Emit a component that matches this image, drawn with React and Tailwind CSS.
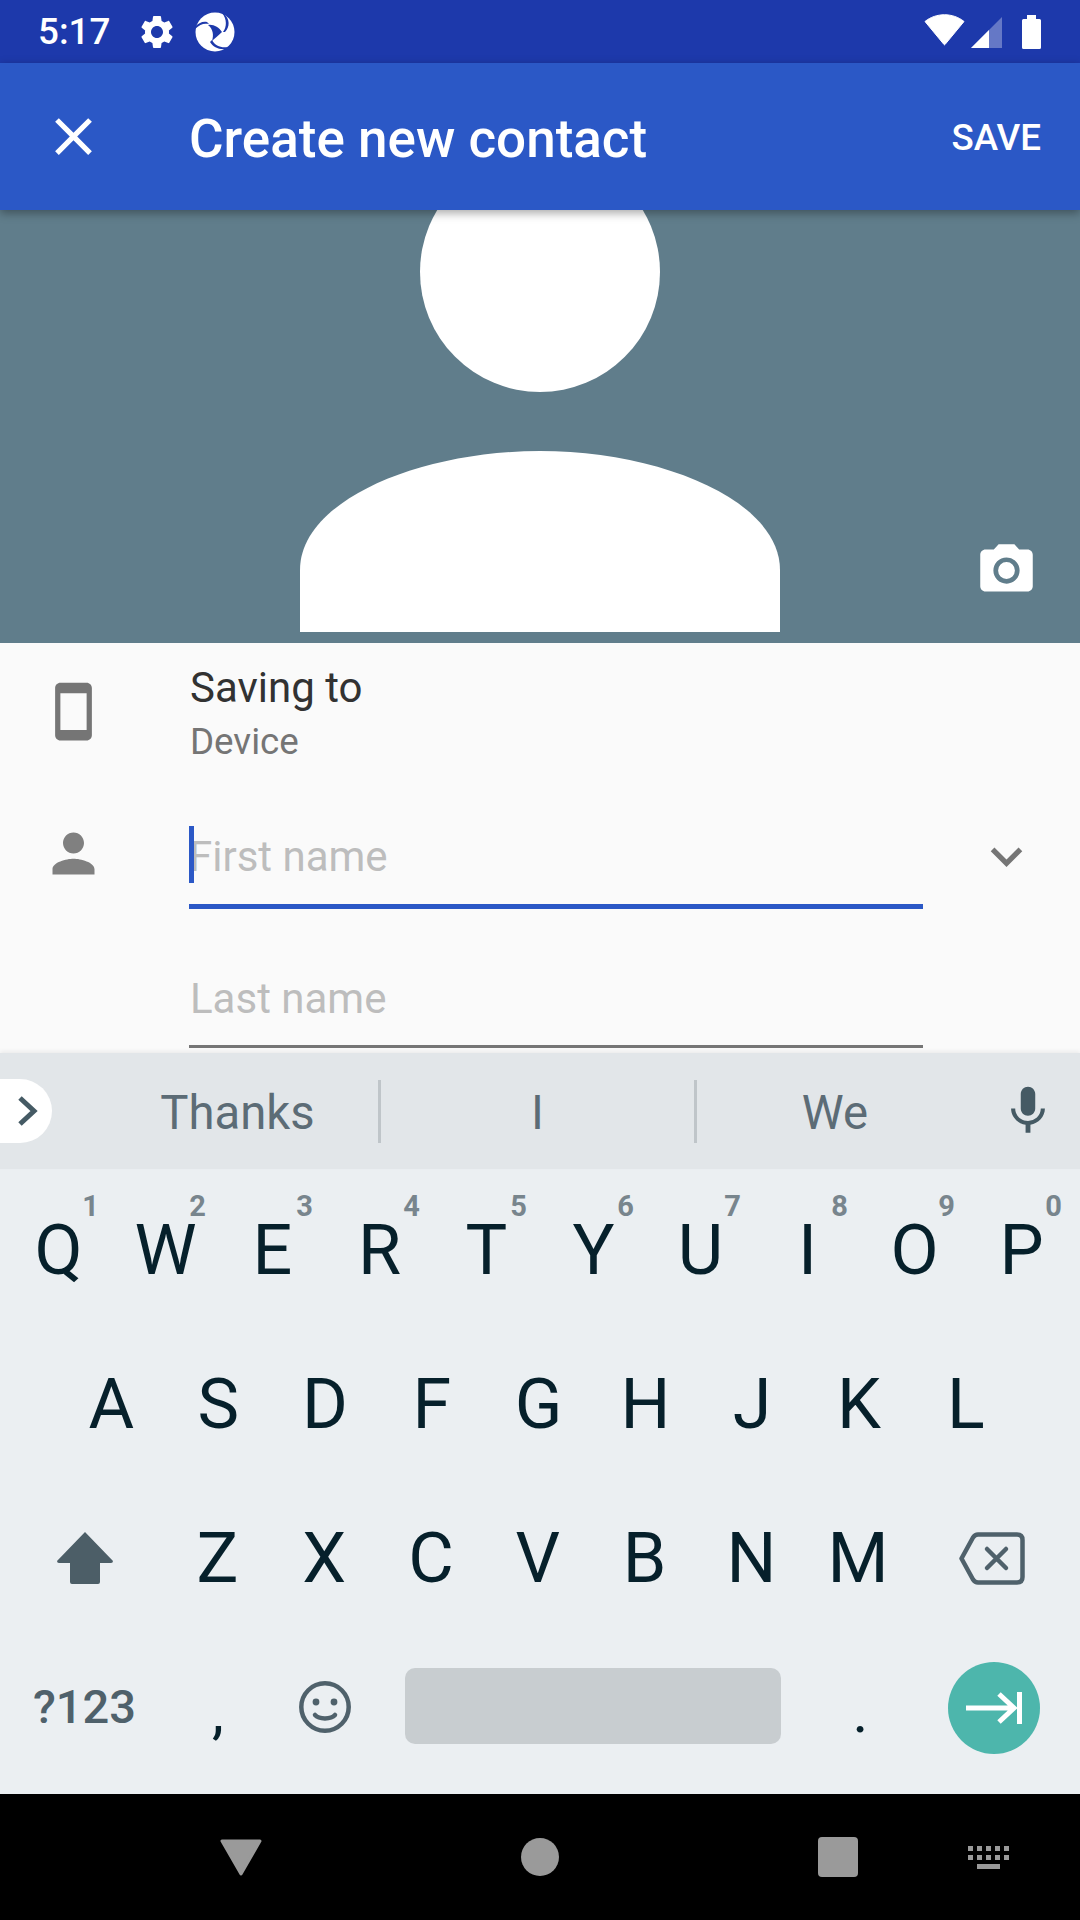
const topRow = [
  ["Q", "1"],
  ["W", "2"],
  ["E", "3"],
  ["R", "4"],
  ["T", "5"],
  ["Y", "6"],
  ["U", "7"],
  ["I", "8"],
  ["O", "9"],
  ["P", "0"],
];
const middleRow = ["A", "S", "D", "F", "G", "H", "J", "K", "L"];
const bottomRow = ["Z", "X", "C", "V", "B", "N", "M"];

function Key({ label, digit }) {
  return (
    <div className={`relative flex h-[154px] items-center justify-center text-[70px] leading-[154px] text-[#06202b] ${digit ? "w-[107px]" : "w-[106.8px]"}`}>
      {label}
      {digit && (
        <span className="absolute right-[13px] top-[19px] text-[29px] font-bold leading-[29px] text-[#78858d]">
          {digit}
        </span>
      )}
    </div>
  );
}

function MaterialIcon({ d, className }) {
  return (
    <svg viewBox="0 0 24 24" className={className} fill="currentColor">
      <path d={d} />
    </svg>
  );
}

function StatusBar() {
  return (
    <div className="flex h-[63px] shrink-0 items-center bg-[#1d39ab] pl-[38px] pr-[39px] text-white">
      <span className="text-[36.75px] font-medium leading-[63px]">5:17</span>
      <MaterialIcon
        className="ml-[27px] h-[40px] w-[40px]"
        d="M19.14 12.94c.04-.3.06-.61.06-.94 0-.32-.02-.64-.07-.94l2.03-1.58c.18-.14.23-.41.12-.61l-1.92-3.32c-.12-.22-.37-.29-.59-.22l-2.39.96c-.5-.38-1.03-.7-1.62-.94l-.36-2.54c-.04-.24-.24-.41-.48-.41h-3.84c-.24 0-.43.17-.47.41l-.36 2.54c-.59.24-1.13.57-1.62.94l-2.39-.96c-.22-.08-.47 0-.59.22L2.74 8.87c-.12.21-.08.47.12.61l2.03 1.58c-.05.3-.09.63-.09.94s.02.64.07.94l-2.03 1.58c-.18.14-.23.41-.12.61l1.92 3.32c.12.22.37.29.59.22l2.39-.96c.5.38 1.03.7 1.62.94l.36 2.54c.05.24.24.41.48.41h3.84c.24 0 .44-.17.47-.41l.36-2.54c.59-.24 1.13-.56 1.62-.94l2.39.96c.22.08.47 0 .59-.22l1.92-3.32c.12-.22.07-.47-.12-.61l-2.01-1.58zM12 15.6c-1.98 0-3.6-1.62-3.6-3.6s1.62-3.6 3.6-3.6 3.6 1.62 3.6 3.6-1.62 3.6-3.6 3.6z"
      />
      {/* app logo */}
      <svg viewBox="0 0 40 40" className="ml-[18px] h-[40px] w-[40px]">
        <circle cx="20" cy="20" r="19.5" fill="#fff" />
        <path d="M13 13 C18 12 24 15 27 20 C23 24 19 27 17 29 C19 23 18 17 13 13 Z" fill="#1d39ab" />
        <path d="M27 1 C32 7 32 15 28 20 L30 20 C35 15 35 7 29 2 Z" fill="#1d39ab" />
        <path d="M0 17 C5 12 9 11 14 12 L12 10 C8 9 3 11 0 15 Z" fill="#1d39ab" />
        <path d="M17 28 C20 34 26 36 33 35 L31 37 C24 38 18 35 15 30 Z" fill="#1d39ab" />
      </svg>
      <div className="flex-1" />
      <svg viewBox="0 0 41 32" className="mb-[3px] h-[32px] w-[41px]">
        <path
          d="M1 7.5 C12 -1.5 29 -1.5 40 7.5 L21 30.5 Q20.5 31.2 20 30.5 Z"
          fill="#fff"
          stroke="#fff"
          strokeWidth="1"
          strokeLinejoin="round"
        />
      </svg>
      <svg viewBox="0 0 31 31" className="ml-[6px] mt-[1px] h-[31px] w-[31px]">
        <path d="M0 31 L31 0 V31 Z" fill="#fff" fillOpacity="0.32" />
        <path d="M0 31 L18 13 V31 Z" fill="#fff" />
      </svg>
      <svg viewBox="0 0 19 34" className="ml-[20px] h-[34px] w-[19px]">
        <path
          d="M5 0 H14 V4 H17.5 Q19 4 19 5.5 V32.5 Q19 34 17.5 34 H1.5 Q0 34 0 32.5 V5.5 Q0 4 1.5 4 H5 Z"
          fill="#fff"
        />
      </svg>
    </div>
  );
}

function AppBar() {
  return (
    <div className="relative z-10 flex h-[147px] shrink-0 items-center bg-[#2b58c6] pl-[42px] pr-[39px] text-white shadow-[0_3px_9px_rgba(0,0,0,0.35)]">
      <MaterialIcon
        className="h-[63px] w-[63px]"
        d="M19 6.41L17.59 5 12 10.59 6.41 5 5 6.41 10.59 12 5 17.59 6.41 19 12 13.41 17.59 19 19 17.59 13.41 12z"
      />
      <span className="ml-[84px] flex-1 pt-[5px] text-[53px] font-medium leading-[147px]">Create new contact</span>
      <span className="pt-[2px] text-[36.75px] font-medium leading-[147px]">SAVE</span>
    </div>
  );
}

function Hero() {
  return (
    <div className="relative flex h-[433px] shrink-0 justify-center overflow-hidden bg-[#607d8b]">
      <svg viewBox="0 0 480 422" className="h-[422px] w-[480px]" fill="#fff">
        <circle cx="240" cy="62" r="120" />
        <path d="M0 422 V360 C0 290 120 241 240 241 C360 241 480 290 480 360 V422 Z" />
      </svg>
      <svg viewBox="0 0 24 24" className="absolute left-[975px] top-[329px] h-[63px] w-[63px]" fill="#fff" fillRule="evenodd">
        <path d="M9 2L7.17 4H4c-1.1 0-2 .9-2 2v12c0 1.1.9 2 2 2h16c1.1 0 2-.9 2-2V6c0-1.1-.9-2-2-2h-3.17L15 2H9zm3 15c-2.76 0-5-2.24-5-5s2.24-5 5-5 5 2.24 5 5-2.24 5-5 5zm0-8.2a3.2 3.2 0 1 0 0 6.4 3.2 3.2 0 0 0 0-6.4z" />
      </svg>
    </div>
  );
}

function Form() {
  return (
    <div className="h-[410px] shrink-0 overflow-hidden bg-[#fafafa] pt-[20px]">
      <div className="flex">
        <MaterialIcon
          className="ml-[42px] mt-[17px] h-[63px] w-[63px] text-[#757575]"
          d="M17 1.01L7 1c-1.1 0-2 .9-2 2v18c0 1.1.9 2 2 2h10c1.1 0 2-.9 2-2V3c0-1.1-.9-1.99-2-1.99zM17 19H7V5h10v14z"
        />
        <div className="ml-[85px]">
          <div className="text-[42px] leading-[50px] text-[#323232]">Saving to</div>
          <div className="mt-[7px] text-[36.75px] leading-[44px] text-[#757575]">Device</div>
        </div>
      </div>

      <div className="mt-[68px] flex">
        <MaterialIcon
          className="ml-[42px] -mt-[10px] h-[63px] w-[63px] text-[#808080]"
          d="M12 12c2.21 0 4-1.79 4-4s-1.79-4-4-4-4 1.79-4 4 1.79 4 4 4zm0 2c-2.67 0-8 1.34-8 4v2h16v-2c0-2.66-5.33-4-8-4z"
        />
        <div className="relative ml-[84px] w-[734px] border-b-[5px] border-[#2b58c6] pb-[22px] text-[42px] leading-[50px] text-[#bdbdbd]">
          First name
          <div className="absolute left-0 top-[-6px] h-[57px] w-[5px] bg-[#2b58c6]" />
        </div>
        <MaterialIcon
          className="ml-[52px] -mt-[7px] h-[63px] w-[63px] text-[#757575]"
          d="M16.59 8.59L12 13.17 7.41 8.59 6 10l6 6 6-6z"
        />
      </div>

      <div className="ml-[189px] mt-[65px] w-[734px] border-b-[3px] border-[#757575] pb-[21px] pl-[1px] text-[42px] leading-[50px] text-[#bdbdbd]">
        Last name
      </div>
    </div>
  );
}

function SuggestionStrip() {
  return (
    <div className="relative z-10 flex h-[116px] shrink-0 items-center bg-[#e2e6e9] text-[47.25px] leading-[64px] text-[#5c6c76] shadow-[0_-2px_4px_rgba(0,0,0,0.06)]">
      <div className="flex h-[64px] w-[52px] items-center justify-end rounded-r-[32px] bg-white pr-[14px] text-[#455a64]">
        <svg viewBox="0 0 20 30" className="h-[30px] w-[20px]" fill="none" stroke="currentColor" strokeWidth="5">
          <path d="M2 2 L16 15 L2 28" />
        </svg>
      </div>
      <div className="ml-[43px] w-[283px] pl-[2px] pt-[4px] text-center">Thanks</div>
      <div className="h-[63px] w-[3px] bg-[#bfc5c9]" />
      <div className="w-[313px] pt-[4px] text-center">I</div>
      <div className="h-[63px] w-[3px] bg-[#bfc5c9]" />
      <div className="w-[276px] pt-[4px] text-center">We</div>
      <MaterialIcon
        className="ml-[26px] h-[58px] w-[58px] text-[#455a64]"
        d="M12 14c1.66 0 2.99-1.34 2.99-3L15 5c0-1.66-1.34-3-3-3S9 3.34 9 5v6c0 1.66 1.34 3 3 3zm5.3-3c0 3-2.54 5.1-5.3 5.1S6.7 14 6.7 11H5c0 3.41 2.72 6.23 6 6.72V21h2v-3.28c3.28-.48 6-3.3 6-6.72h-1.7z"
      />
    </div>
  );
}

function Keyboard() {
  return (
    <div className="flex-1 bg-[#ebeff2] px-[5px] pt-[4px]">
      <div className="flex">
        {topRow.map(([label, digit]) => (
          <Key key={label} label={label} digit={digit} />
        ))}
      </div>
      <div className="flex pl-[53px]">
        {middleRow.map((label) => (
          <Key key={label} label={label} />
        ))}
      </div>
      <div className="flex">
        <div className="flex h-[154px] w-[159px] items-center justify-center">
          <svg viewBox="0 0 56 52" className="h-[52px] w-[56px]" fill="#4c5e67">
            <path d="M28 0 L56 29 Q56 31 54 31 H43 V50 Q43 52 41 52 H15 Q13 52 13 50 V31 H2 Q0 31 0 29 Z" />
          </svg>
        </div>
        {bottomRow.map((label) => (
          <Key key={label} label={label} />
        ))}
        <div className="flex h-[154px] w-[161px] items-center justify-center">
          <svg viewBox="0 0 66 53" className="h-[53px] w-[66px]" fill="none" stroke="#4f616b" strokeWidth="4.5" strokeLinejoin="round" strokeLinecap="round">
            <path d="M19 2.5 H58 Q63.5 2.5 63.5 8 V45 Q63.5 50.5 58 50.5 H19 Q16 50.5 14 47.5 L2.5 26.5 L14 5.5 Q16 2.5 19 2.5 Z" />
            <path d="M28 17 L47 36 M47 17 L28 36" />
          </svg>
        </div>
      </div>
      <div className="flex h-[146px] items-center">
        <div className="mb-[2px] flex w-[159px] justify-center text-[47px] font-medium leading-[60px] text-[#4f616b]">?123</div>
        <div className="flex w-[108px] justify-center pt-[8px] text-[60px] leading-[60px] text-[#06202b]">,</div>
        <div className="mb-[2px] flex w-[106px] justify-center">
          <svg viewBox="0 0 52 52" className="h-[52px] w-[52px]" fill="none" stroke="#4f616b" strokeWidth="4.5">
            <circle cx="26" cy="26" r="23.7" />
            <circle cx="17" cy="21" r="3.4" fill="#4f616b" stroke="none" />
            <circle cx="35" cy="21" r="3.4" fill="#4f616b" stroke="none" />
            <path d="M16 34 C20 38.5 32 38.5 36 34" strokeLinecap="round" />
          </svg>
        </div>
        <div className="mb-[4px] w-[429px] pl-[27px] pr-[26px]">
          <div className="h-[76px] rounded-[10px] bg-[#c8cdd0]" />
        </div>
        <div className="flex w-[107px] justify-center pt-[8px] text-[60px] leading-[60px] text-[#06202b]">.</div>
        <div className="flex w-[159px] justify-center">
          <div className="flex h-[92px] w-[92px] items-center justify-center rounded-full bg-[#4db6ac]">
            <svg viewBox="0 0 56 32" className="h-[32px] w-[56px]" fill="none" stroke="#fff" strokeWidth="5">
              <path d="M0 16 H48 M33 2 L48 16 L33 30 M53.5 0 V32" />
            </svg>
          </div>
        </div>
      </div>
    </div>
  );
}

function NavBar() {
  return (
    <div className="relative flex h-[126px] shrink-0 items-center bg-black text-[#9a9a9a]">
      <svg viewBox="0 0 42 37" className="ml-[220px] h-[37px] w-[42px]" fill="#9a9a9a" stroke="#9a9a9a" strokeWidth="3" strokeLinejoin="round">
        <path d="M2 2 H40 L21 35 Z" />
      </svg>
      <div className="ml-[259px] h-[38px] w-[38px] rounded-full bg-[#9a9a9a]" />
      <div className="ml-[259px] h-[40px] w-[40px] rounded-[4px] bg-[#9a9a9a]" />
      <svg viewBox="0 0 41 23" className="ml-[110px] mt-[1px] h-[23px] w-[41px]" fill="#9a9a9a">
        {[0, 9, 18, 27, 36].map((x) => (
          <g key={x}>
            <rect x={x} y="0" width="5" height="5" />
            <rect x={x} y="9" width="5" height="5" />
          </g>
        ))}
        <rect x="9" y="18" width="23" height="5" />
      </svg>
    </div>
  );
}

export default function App() {
  return (
    <div className="flex h-[1920px] w-[1080px] flex-col overflow-hidden font-[Roboto,sans-serif]">
      <StatusBar />
      <AppBar />
      <Hero />
      <Form />
      <SuggestionStrip />
      <Keyboard />
      <NavBar />
    </div>
  );
}
